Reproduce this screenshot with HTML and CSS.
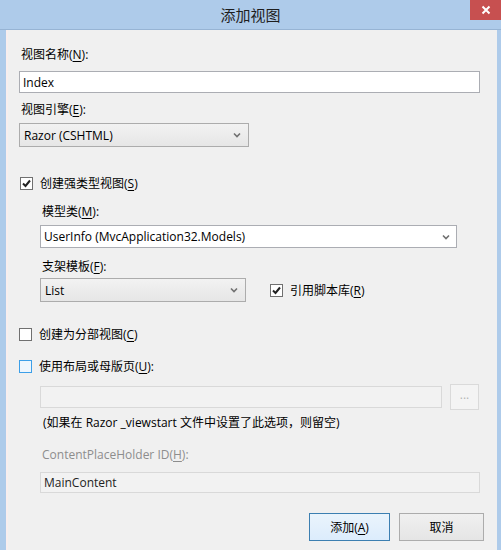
FILE: index.html
```html
<!DOCTYPE html>
<html lang="zh-CN">
<head>
    <meta charset="UTF-8">
    <title>添加视图</title>
    <link rel="stylesheet" href="styles.css">
</head>
<body>
    <div class="window">
        <div class="title-bar">
            <span class="title">添加视图</span>
            <div class="close-btn">
                <svg width="10" height="10" viewBox="0 0 10 10"><path d="M1.5 1.5 L8.5 8.5 M8.5 1.5 L1.5 8.5" stroke="#fff" stroke-width="2"/></svg>
            </div>
        </div>
        <div class="client">
            <div class="label first">视图名称(<u>N</u>):</div>
            <div class="textbox name-box">Index</div>

            <div class="label label-engine">视图引擎(<u>E</u>):</div>
            <div class="combo engine-combo">
                <span>Razor (CSHTML)</span>
                <svg class="arrow" width="8" height="6" viewBox="0 0 8 6"><path d="M1 1.5 L4 4.5 L7 1.5" stroke="#707070" stroke-width="1.6" fill="none"/></svg>
            </div>

            <div class="check-row strong-row">
                <span class="checkbox checked">
                    <svg width="11" height="11" viewBox="0 0 11 11"><path d="M2 5.5 L4.5 8 L9 2.5" stroke="#222" stroke-width="2" fill="none"/></svg>
                </span>
                <span>创建强类型视图(<u>S</u>)</span>
            </div>

            <div class="indent">
                <div class="label label-model">模型类(<u>M</u>):</div>
                <div class="textbox model-combo">
                    <span>UserInfo (MvcApplication32.Models)</span>
                    <svg class="arrow" width="8" height="6" viewBox="0 0 8 6"><path d="M1 1.5 L4 4.5 L7 1.5" stroke="#707070" stroke-width="1.6" fill="none"/></svg>
                </div>

                <div class="label label-scaffold">支架模板(<u>F</u>):</div>
                <div class="scaffold-row">
                    <div class="combo scaffold-combo">
                        <span>List</span>
                        <svg class="arrow" width="8" height="6" viewBox="0 0 8 6"><path d="M1 1.5 L4 4.5 L7 1.5" stroke="#707070" stroke-width="1.6" fill="none"/></svg>
                    </div>
                    <div class="check-row script-check">
                        <span class="checkbox checked">
                            <svg width="11" height="11" viewBox="0 0 11 11"><path d="M2 5.5 L4.5 8 L9 2.5" stroke="#222" stroke-width="2" fill="none"/></svg>
                        </span>
                        <span>引用脚本库(<u>R</u>)</span>
                    </div>
                </div>
            </div>

            <div class="check-row partial-row">
                <span class="checkbox"></span>
                <span>创建为分部视图(<u>C</u>)</span>
            </div>

            <div class="check-row layout-row">
                <span class="checkbox hover"></span>
                <span>使用布局或母版页(<u>U</u>):</span>
            </div>

            <div class="indent">
                <div class="layout-path">
                    <div class="textbox disabled path-box"></div>
                    <div class="browse-btn">...</div>
                </div>
                <div class="note">(如果在 Razor _viewstart 文件中设置了此选项，则留空)</div>

                <div class="label label-holder">ContentPlaceHolder ID(<u>H</u>):</div>
                <div class="textbox disabled holder-box">MainContent</div>
            </div>

            <div class="buttons">
                <div class="btn default">添加(<u>A</u>)</div>
                <div class="btn">取消</div>
            </div>
        </div>
    </div>
</body>
</html>
```

FILE: styles.css
```css
body {
    margin: 0;
    padding: 0;
    background-color: #aecbea;
    font-family: "Open Sans", "Noto Sans CJK SC", sans-serif;
    font-size: 12px;
    color: #000;
}

.window {
    width: 501px;
    height: 550px;
    display: flex;
    flex-direction: column;
    overflow: hidden;
}

.title-bar {
    height: 29px;
    position: relative;
    display: flex;
    justify-content: center;
    align-items: center;
    border-bottom: 1px solid #97b4d4;
}

.title {
    font-size: 15px;
    color: #1e1e1e;
}

.close-btn {
    position: absolute;
    top: 0;
    right: 0;
    width: 31px;
    height: 20px;
    background-color: #c75050;
    display: flex;
    justify-content: center;
    align-items: center;
}

.client {
    flex: 1;
    margin-left: 6px;
    margin-right: 4px;
    border-left: 2px solid #f8eeee;
    background-color: #f0f0f0;
    padding: 0 17px 0 11px;
    display: flex;
    flex-direction: column;
}

.label {
    height: 16px;
    line-height: 16px;
    padding-left: 2px;
}

.label.first { margin-top: 17px; }
.label-engine { margin-top: 9px; }
.label-model { margin-top: 13px; }
.label-scaffold { margin-top: 11px; }
.label-holder { margin-top: 16px; color: #8d8d8d; }

u {
    text-decoration: underline;
    text-underline-offset: 2px;
}

.textbox {
    box-sizing: border-box;
    height: 22px;
    border: 1px solid #abadb3;
    background-color: #fff;
    padding: 0 3px;
    display: flex;
    align-items: center;
    position: relative;
}

.name-box { margin-top: 8px; }

.combo {
    box-sizing: border-box;
    height: 24px;
    border: 1px solid #acacac;
    background: linear-gradient(#f2f2f2, #e6e6e6);
    padding: 0 4px;
    display: flex;
    align-items: center;
    justify-content: space-between;
}

.engine-combo {
    width: 230px;
    margin-top: 5px;
}

.model-combo {
    height: 23px;
    margin-top: 5px;
    width: 417px;
    justify-content: space-between;
}

.arrow {
    margin-right: 3px;
}

.check-row {
    display: flex;
    align-items: center;
    height: 16px;
    gap: 7px;
}

.strong-row { margin-top: 28px; padding-left: 1px; }
.partial-row { margin-top: 24px; }
.layout-row { margin-top: 16px; }

.checkbox {
    box-sizing: border-box;
    width: 13px;
    height: 13px;
    border: 1px solid #707070;
    background-color: #fff;
    display: flex;
    justify-content: center;
    align-items: center;
}

.checkbox.hover {
    border-color: #3c9fe8;
    background-color: #eef6fd;
}

.indent {
    padding-left: 21px;
    display: flex;
    flex-direction: column;
}

.scaffold-row {
    margin-top: 3px;
    display: flex;
    align-items: center;
    gap: 24px;
}

.scaffold-combo {
    width: 206px;
}

.layout-path {
    margin-top: 10px;
    height: 26px;
    display: flex;
    align-items: center;
    gap: 8px;
}

.textbox.disabled {
    border-color: #d9d9d9;
    background-color: #f2f2f2;
}

.path-box {
    width: 402px;
}

.browse-btn {
    box-sizing: border-box;
    width: 29px;
    height: 26px;
    border: 1px solid #dadada;
    background-color: #f4f4f4;
    color: #b4b4b4;
    text-align: center;
    line-height: 20px;
}

.note {
    margin-top: 5px;
    height: 16px;
    line-height: 16px;
    padding-left: 3px;
}

.holder-box {
    margin-top: 9px;
    height: 21px;
    color: #222;
}

.buttons {
    margin-top: 20px;
    margin-right: -4px;
    display: flex;
    justify-content: flex-end;
    gap: 9px;
}

.btn {
    box-sizing: border-box;
    width: 81px;
    height: 28px;
    border: 1px solid #acacac;
    background: linear-gradient(#f0f0f0, #e5e5e5);
    display: flex;
    justify-content: center;
    align-items: center;
}

.btn + .btn {
    width: 85px;
}

.btn.default {
    border-color: #3c7fb1;
    background: linear-gradient(#eaf4fc, #dcecfc);
}
```
